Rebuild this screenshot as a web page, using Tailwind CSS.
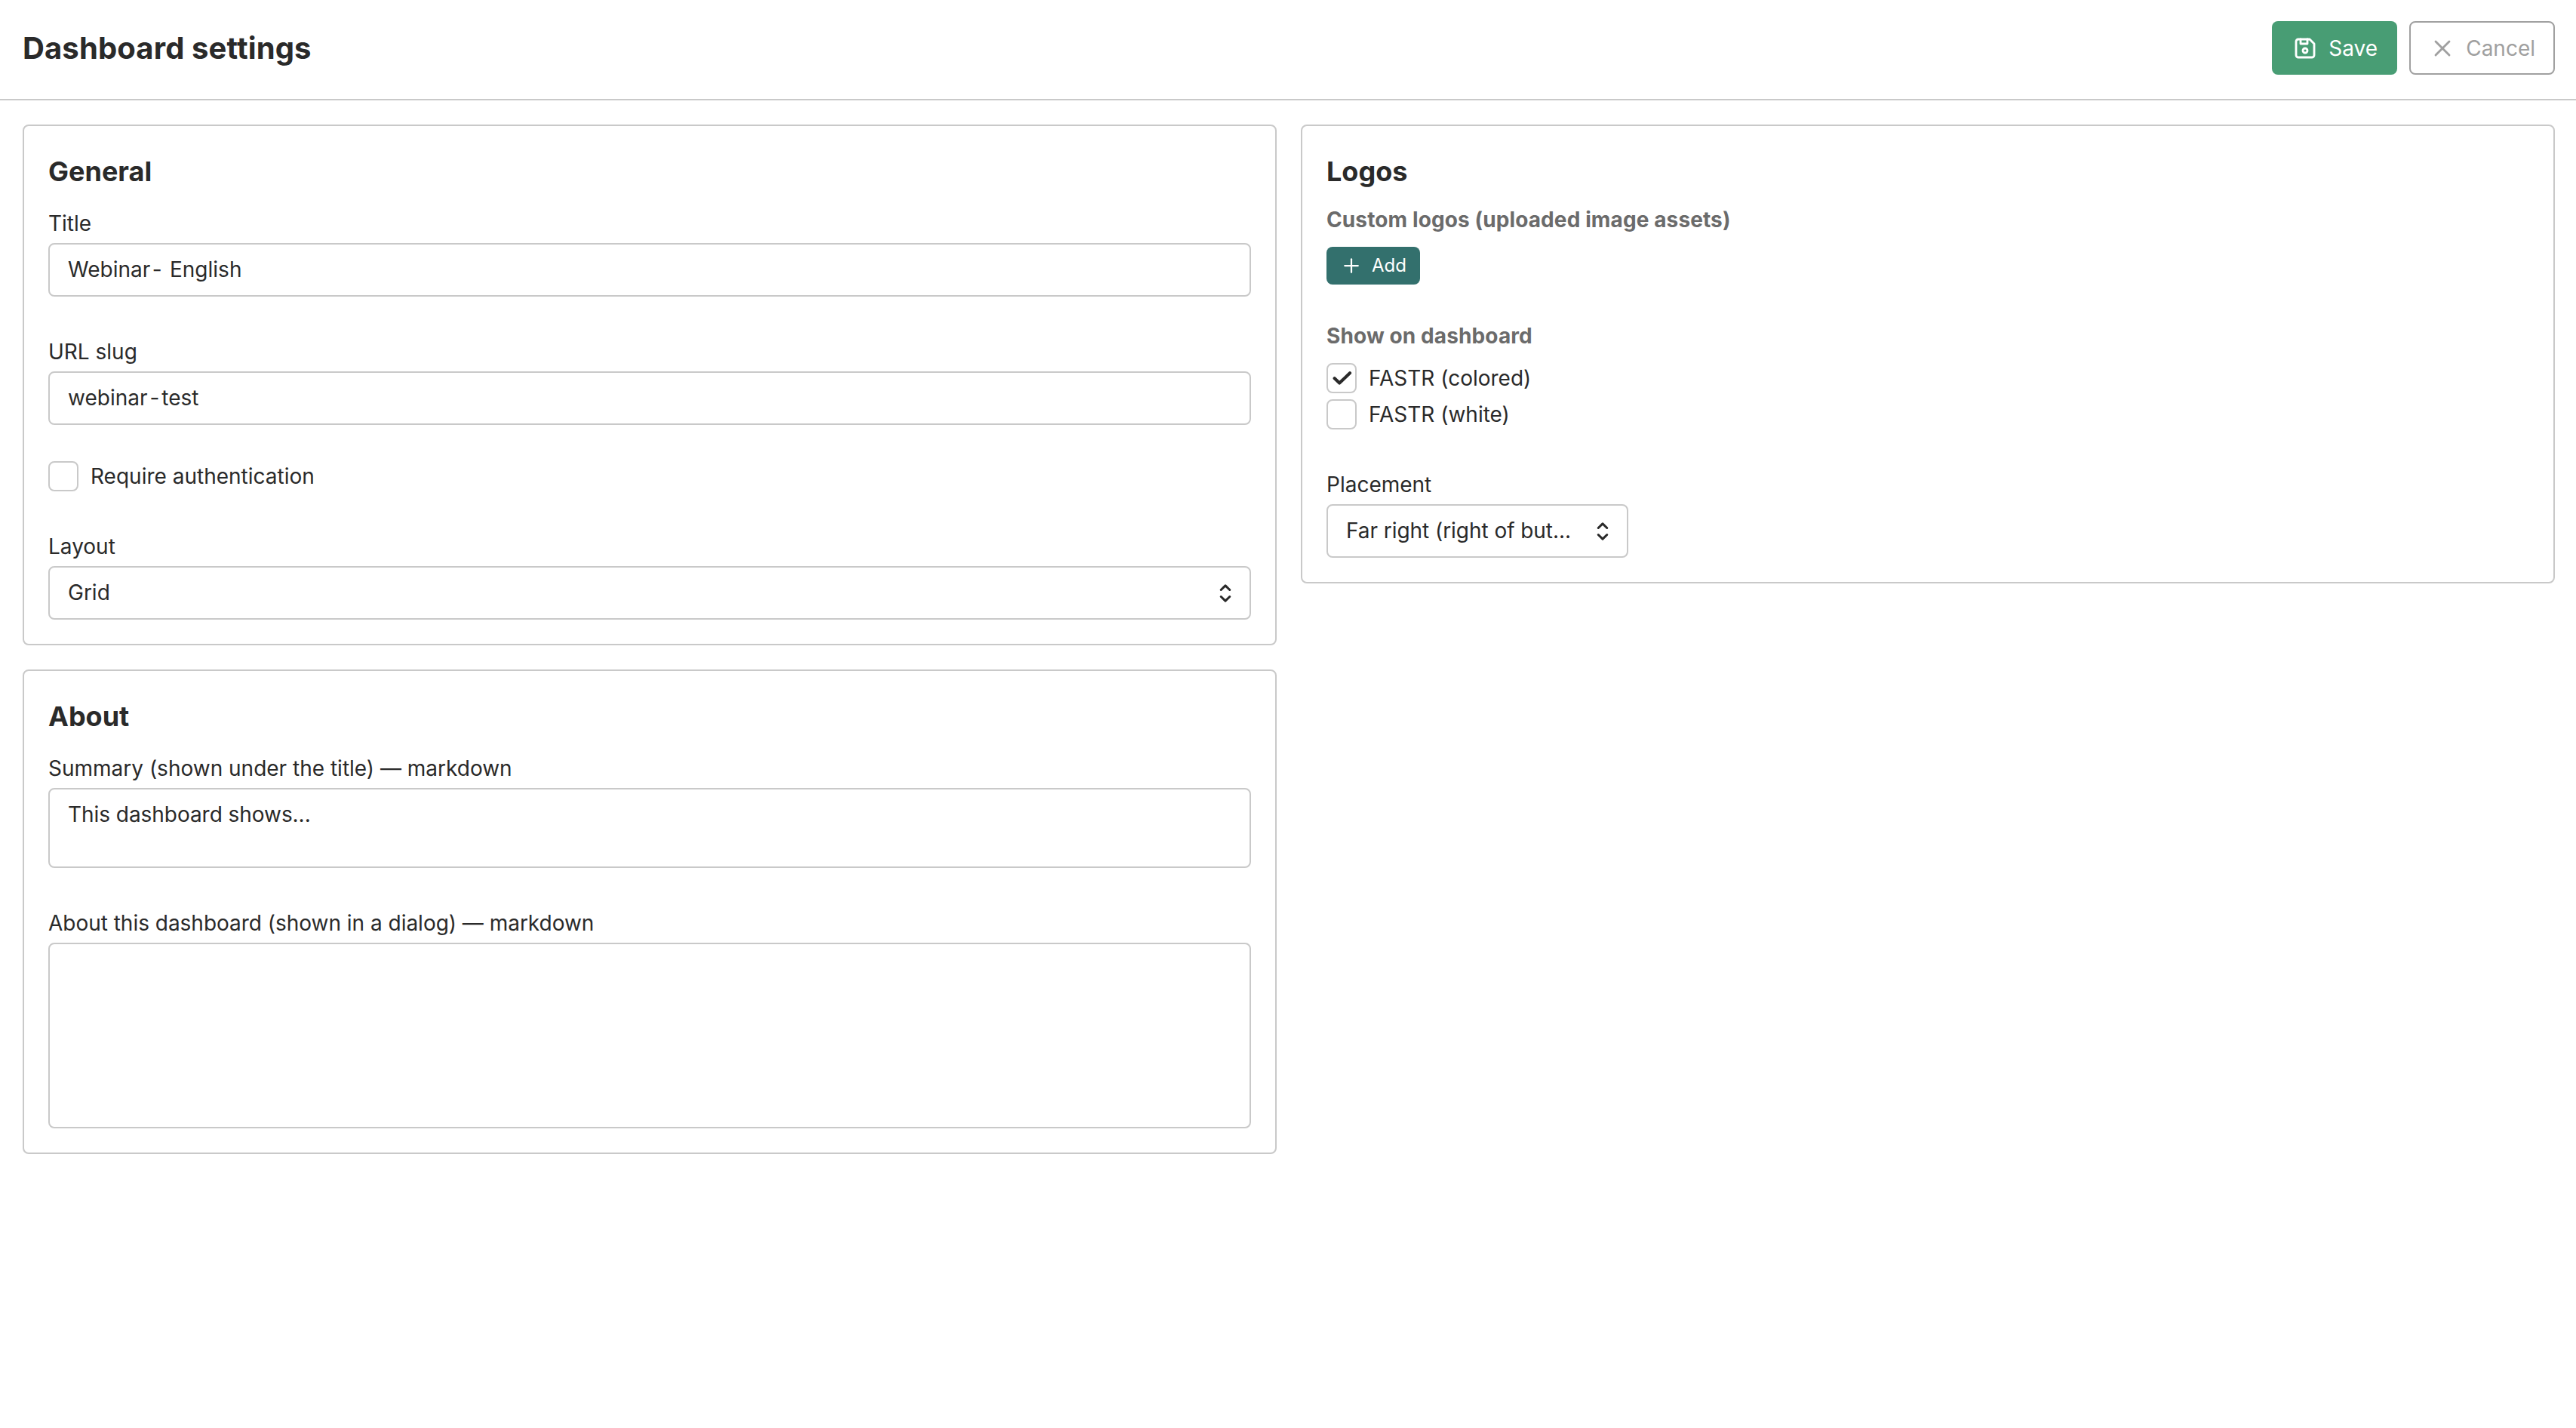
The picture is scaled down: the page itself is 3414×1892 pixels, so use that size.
<!DOCTYPE html>
<html lang="en">
<head>
    <meta charset="UTF-8">
    <title>Dashboard settings</title>
    <meta name="viewport" content="width=device-width, initial-scale=1.0">
    <script src="https://cdn.jsdelivr.net/npm/@tailwindcss/browser@4"></script>
</head>
<body class="bg-white min-h-screen text-[#2a2a2a] font-['Inter',sans-serif] text-[28px] leading-[40px]">
    <!-- Header -->
    <header class="flex items-center justify-between h-[133px] pl-[30px] pr-[28px] pb-[4px] border-b-2 border-[#c9c9c9]">
        <h1 class="text-[40px] leading-[56px] font-bold tracking-[0.13px]">Dashboard settings</h1>
        <div class="flex gap-4">
            <button class="flex items-center justify-between w-[166px] h-[71px] px-[26px] rounded-lg bg-[#489d74] text-white">
                <svg class="w-[36px] h-[36px]" viewBox="0 0 24 24" fill="none" stroke="currentColor" stroke-width="1.9" stroke-linecap="round" stroke-linejoin="round">
                    <path d="M6 4h10l4 4v10a2 2 0 0 1 -2 2h-12a2 2 0 0 1 -2 -2v-12a2 2 0 0 1 2 -2" />
                    <circle cx="12" cy="14" r="2" />
                    <path d="M14 4v4h-6v-4" />
                </svg>
                <span>Save</span>
            </button>
            <button class="flex items-center justify-between w-[193px] h-[71px] px-6 rounded-lg border-2 border-[#a0a0a0] text-[#a0a0a0]">
                <svg class="w-[36px] h-[36px]" viewBox="0 0 24 24" fill="none" stroke="currentColor" stroke-width="1.9" stroke-linecap="round" stroke-linejoin="round">
                    <path d="M18 6l-12 12" />
                    <path d="M6 6l12 12" />
                </svg>
                <span>Cancel</span>
            </button>
        </div>
    </header>

    <!-- Settings -->
    <main class="grid grid-cols-2 items-start gap-8 pt-8 pl-[30px] pr-[28px]">
        <div class="flex flex-col gap-8">
            <section class="p-8 border-2 border-[#c9c9c9] rounded-lg">
                <h2 class="text-[36px] leading-[56px] font-bold mb-4">General</h2>
                <div class="flex flex-col gap-12">
                    <div>
                        <label class="block leading-[51px]">Title</label>
                        <div class="h-[71px] px-6 leading-[66px] border-2 border-[#c9c9c9] rounded-lg">Webinar<span class="mx-[2.5px]">-</span> English</div>
                    </div>
                    <div>
                        <label class="block leading-[51px]">URL slug</label>
                        <div class="h-[71px] px-6 leading-[66px] border-2 border-[#c9c9c9] rounded-lg">webinar<span class="mx-[3px]">-</span>test</div>
                    </div>
                    <label class="flex items-center gap-4">
                        <span class="size-10 border-2 border-[#c9c9c9] rounded-lg"></span>
                        Require authentication
                    </label>
                    <div>
                        <label class="block leading-[51px]">Layout</label>
                        <div class="flex items-center justify-between h-[71px] pl-6 pr-[14px] border-2 border-[#c9c9c9] rounded-lg">
                            <span class="pb-0.5">Grid</span>
                            <svg class="w-[36px] h-[36px]" viewBox="0 0 20 20" fill="none" stroke="currentColor" stroke-width="1.7" stroke-linecap="round" stroke-linejoin="round">
                                <path d="M6.8 7.5L10 4.4l3.2 3.1M6.8 12.5l3.2 3.1 3.2-3.1" />
                            </svg>
                        </div>
                    </div>
                </div>
            </section>

            <section class="p-8 border-2 border-[#c9c9c9] rounded-lg">
                <h2 class="text-[36px] leading-[56px] font-bold mb-4">About</h2>
                <div class="flex flex-col gap-12">
                    <div>
                        <label class="block leading-[51px]">Summary (shown under the title) — markdown</label>
                        <div class="h-[106px] px-6 py-[13px] border-2 border-[#c9c9c9] rounded-lg tracking-[-0.05px]">This dashboard shows...</div>
                    </div>
                    <div>
                        <label class="block leading-[51px] tracking-[-0.02px]">About this dashboard (shown in a dialog) — markdown</label>
                        <div class="h-[246px] px-6 py-[13px] border-2 border-[#c9c9c9] rounded-lg"></div>
                    </div>
                </div>
            </section>
        </div>

        <section class="p-8 border-2 border-[#c9c9c9] rounded-lg">
            <h2 class="text-[36px] leading-[56px] font-bold mb-4">Logos</h2>
            <div class="flex flex-col gap-12">
                <div>
                    <h3 class="font-bold tracking-[0.11px] text-[#6b6b6b] mb-4">Custom logos (uploaded image assets)</h3>
                    <button class="flex items-center justify-between w-[124px] h-[50px] px-[18px] rounded-lg bg-[#33706d] text-white text-[24px]">
                        <svg class="w-[30px] h-[30px]" viewBox="0 0 24 24" fill="none" stroke="currentColor" stroke-width="1.8" stroke-linecap="round" stroke-linejoin="round">
                            <path d="M12 5v14" />
                            <path d="M5 12h14" />
                        </svg>
                        <span>Add</span>
                    </button>
                </div>
                <div>
                    <h3 class="font-bold tracking-[0.11px] text-[#6b6b6b] mb-4">Show on dashboard</h3>
                    <div class="flex flex-col gap-2">
                        <label class="flex items-center gap-4">
                            <span class="flex items-center justify-center size-10 border-2 border-[#c9c9c9] rounded-lg">
                                <svg class="w-[28px] h-[28px]" viewBox="0 0 28 28" fill="none" stroke="currentColor" stroke-width="4.2" stroke-linecap="round" stroke-linejoin="round">
                                    <path d="M4.700 14.200l6.500 6.300L25 7.300" />
                                </svg>
                            </span>
                            FASTR (colored)
                        </label>
                        <label class="flex items-center gap-4">
                            <span class="size-10 border-2 border-[#c9c9c9] rounded-lg"></span>
                            FASTR (white)
                        </label>
                    </div>
                </div>
                <div>
                    <label class="block leading-[51px]">Placement</label>
                    <div class="flex items-center justify-between w-[400px] h-[71px] pl-6 pr-[14px] border-2 border-[#c9c9c9] rounded-lg">
                        <span class="pb-0.5 tracking-[-0.05px]">Far right (right of but...</span>
                        <svg class="w-[36px] h-[36px]" viewBox="0 0 20 20" fill="none" stroke="currentColor" stroke-width="1.7" stroke-linecap="round" stroke-linejoin="round">
                            <path d="M6.8 7.5L10 4.4l3.2 3.1M6.8 12.5l3.2 3.1 3.2-3.1" />
                        </svg>
                    </div>
                </div>
            </div>
        </section>
    </main>
</body>
</html>
